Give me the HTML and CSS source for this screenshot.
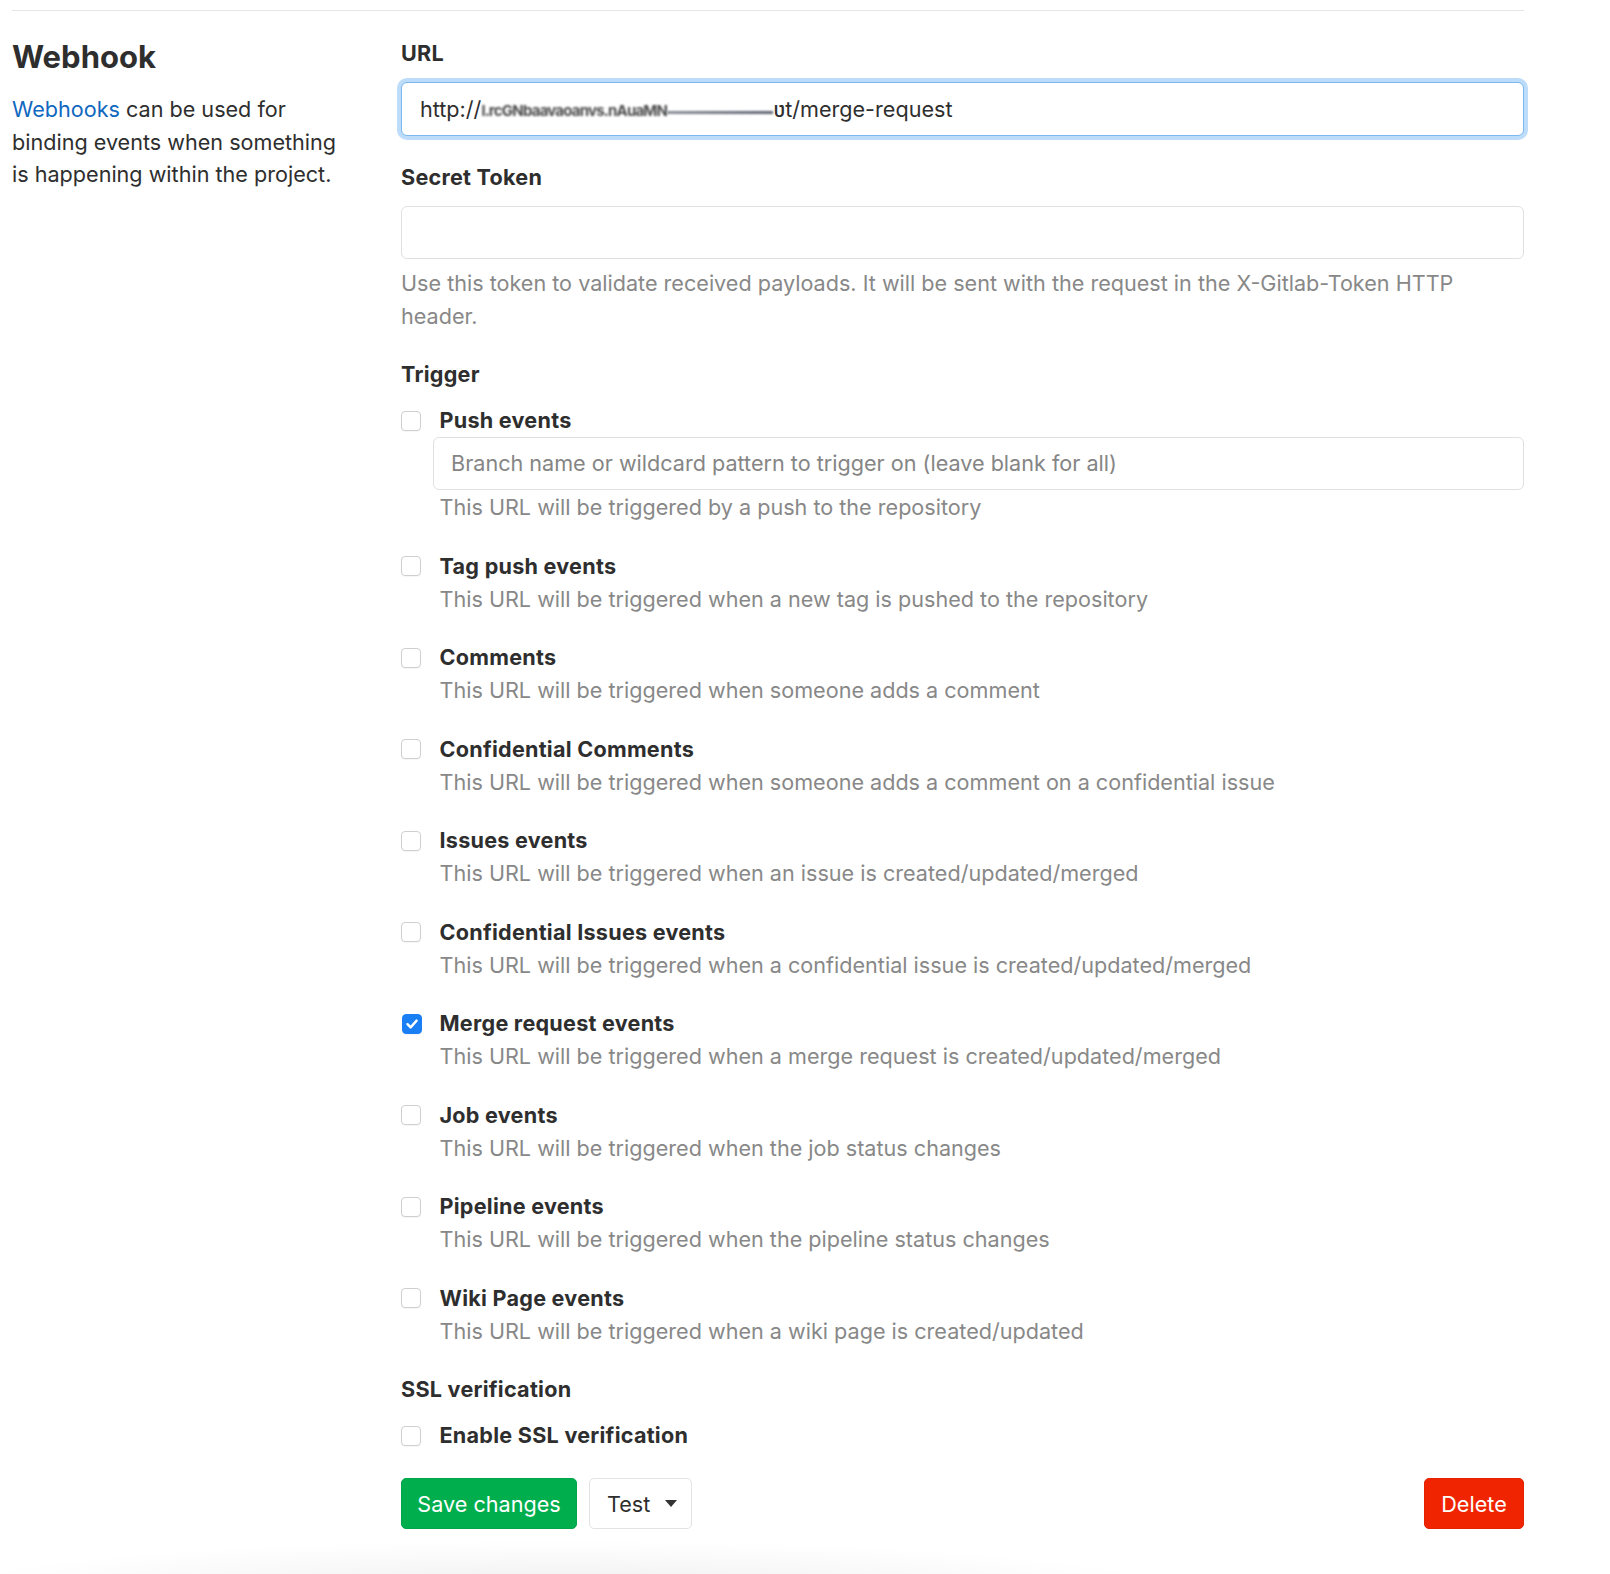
FILE: index.html
```html
<!DOCTYPE html>
<html lang="en">
<head>
<meta charset="utf-8">
<title>Webhook</title>
<link rel="stylesheet" href="styles.css">
</head>
<body>
<div class="page">
  <div class="rule"></div>
  <div class="row">
    <div class="side">
      <h4 class="side-title">Webhook</h4>
      <p class="side-text"><a class="link" href="#">Webhooks</a> can be used for binding events when something is happening within the project.</p>
    </div>
    <form class="main">
      <div class="group">
        <div class="label">URL</div>
        <div class="input input-focus"><span class="val">http://</span><span class="redact"><span class="redact-txt">l.rcGNbaavaoanvs.nAuaMN</span><span class="redact-line"></span></span><span class="val">ʋt/merge-request</span></div>
      </div>
      <div class="group">
        <div class="label">Secret Token</div>
        <div class="input"></div>
        <div class="help help-block">Use this token to validate received payloads. It will be sent with the request in the X-Gitlab-Token HTTP header.</div>
      </div>
      <div class="section-title">Trigger</div>
      <div class="check">
        <span class="box"></span>
        <div class="check-body">
          <div class="check-label">Push events</div>
          <div class="input input-branch"><span class="placeholder">Branch name or wildcard pattern to trigger on (leave blank for all)</span></div>
          <div class="help">This URL will be triggered by a push to the repository</div>
        </div>
      </div>
      <div class="check">
        <span class="box"></span>
        <div class="check-body">
          <div class="check-label">Tag push events</div>
          <div class="help">This URL will be triggered when a new tag is pushed to the repository</div>
        </div>
      </div>
      <div class="check">
        <span class="box"></span>
        <div class="check-body">
          <div class="check-label">Comments</div>
          <div class="help">This URL will be triggered when someone adds a comment</div>
        </div>
      </div>
      <div class="check">
        <span class="box"></span>
        <div class="check-body">
          <div class="check-label">Confidential Comments</div>
          <div class="help">This URL will be triggered when someone adds a comment on a confidential issue</div>
        </div>
      </div>
      <div class="check">
        <span class="box"></span>
        <div class="check-body">
          <div class="check-label">Issues events</div>
          <div class="help">This URL will be triggered when an issue is created/updated/merged</div>
        </div>
      </div>
      <div class="check">
        <span class="box"></span>
        <div class="check-body">
          <div class="check-label">Confidential Issues events</div>
          <div class="help">This URL will be triggered when a confidential issue is created/updated/merged</div>
        </div>
      </div>
      <div class="check">
        <span class="box box-checked"><svg viewBox="0 0 20 20" width="20" height="20"><path d="M5.5 10.2 L8.6 13.4 L14.6 6.6" fill="none" stroke="#fff" stroke-width="2.4" stroke-linecap="round" stroke-linejoin="round"/></svg></span>
        <div class="check-body">
          <div class="check-label">Merge request events</div>
          <div class="help">This URL will be triggered when a merge request is created/updated/merged</div>
        </div>
      </div>
      <div class="check">
        <span class="box"></span>
        <div class="check-body">
          <div class="check-label">Job events</div>
          <div class="help">This URL will be triggered when the job status changes</div>
        </div>
      </div>
      <div class="check">
        <span class="box"></span>
        <div class="check-body">
          <div class="check-label">Pipeline events</div>
          <div class="help">This URL will be triggered when the pipeline status changes</div>
        </div>
      </div>
      <div class="check">
        <span class="box"></span>
        <div class="check-body">
          <div class="check-label">Wiki Page events</div>
          <div class="help">This URL will be triggered when a wiki page is created/updated</div>
        </div>
      </div>
      <div class="section-title">SSL verification</div>
      <div class="check check-last">
        <span class="box"></span>
        <div class="check-body">
          <div class="check-label">Enable SSL verification</div>
        </div>
      </div>
      <div class="actions">
        <button type="button" class="btn btn-success">Save changes</button>
        <button type="button" class="btn btn-default">Test <span class="caret"></span></button>
        <span class="spacer"></span>
        <button type="button" class="btn btn-danger">Delete</button>
      </div>
    </form>
  </div>
  <div class="shade"></div>
</div>
</body>
</html>
```

FILE: styles.css
```css
* { box-sizing: border-box; }
html, body { margin: 0; padding: 0; background: #fff; }
body {
  font-family: Inter, "Noto Sans", "Liberation Sans", sans-serif;
  font-size: 21.6px;
  line-height: 33px;
  color: #2e2e2e;
}
.page {
  width: 1610px;
  height: 1574px;
  overflow: hidden;
  padding: 10px 0 0 12px;
}
.rule {
  width: 1512px;
  height: 1px;
  background: #e5e5e5;
}
.row {
  display: flex;
  padding-top: 26px;
}
.side {
  width: 389px;
  padding-right: 44px;
  flex: none;
}
.side-title {
  margin: 0;
  font-size: 31px;
  line-height: 40px;
  font-weight: 700;
  color: #2e2e2e;
}
.side-text {
  margin: 16px 0 0;
  line-height: 32.7px;
}
.link { color: #1068bf; text-decoration: none; }
.main {
  width: 1123px;
  flex: none;
  margin: 0;
}
.group { margin-bottom: 25px; }
.label, .section-title, .check-label {
  font-weight: 700;
  line-height: 33px;
  letter-spacing: 0.25px;
}
.label { margin-bottom: 12px; }
.section-title { margin-bottom: 13px; }
.input {
  height: 53px;
  border: 1px solid #e0e0e0;
  border-radius: 6px;
  padding: 0 17px;
  display: flex;
  align-items: center;
  white-space: nowrap;
  overflow: hidden;
  background: #fff;
}
.input-focus {
  height: 54px;
  border-color: #7ab8f0;
  box-shadow: 0 0 0 4px #bcdcfa;
  padding-left: 18px;
}
.val { color: #2e2e2e; }
.redact {
  display: inline-flex;
  align-items: center;
  width: 292px;
  height: 33px;
}
.redact-txt {
  font-size: 15px;
  font-weight: 700;
  letter-spacing: -0.8px;
  color: #4a4a4a;
  filter: blur(1px);
  flex: none;
  margin-top: 3px;
}
.redact-line {
  flex: 1;
  height: 3px;
  margin-top: 6px;
  background: linear-gradient(90deg, #8a8f95 0%, #6f7480 60%, #5d6270 100%);
  filter: blur(0.8px);
}
.help {
  color: #888;
  line-height: 33px;
}
.help-block { margin-top: 8px; }
.check {
  display: flex;
  align-items: flex-start;
  margin-bottom: 25.5px;
}
.check-last { margin-bottom: 26px; }
.box {
  flex: none;
  width: 20px;
  height: 20px;
  margin-top: 6.5px;
  margin-right: 12px;
  border: 1px solid #cfcfcf;
  border-radius: 4px;
  background: #fff;
  box-shadow: 0 1px 1px rgba(0,0,0,0.04);
}
.box-checked {
  background: #1a7ff5;
  border-color: #1a7ff5;
  margin-left: 1px;
  margin-right: 11px;
}
.box-checked svg { display: block; margin: -1px; }
.check-body {
  flex: 1;
  min-width: 0;
}
.check-label { padding-left: 6.5px; }
.check-body .help { padding-left: 6.5px; }
.input-branch { margin-top: 0; margin-bottom: 1px; }
.placeholder { color: #858585; }
.actions {
  display: flex;
  align-items: center;
  gap: 12px;
}
.spacer { flex: 1; }
.btn {
  font-family: inherit;
  font-size: 21.6px;
  height: 51px;
  border-radius: 5px;
  border: 1px solid transparent;
  padding: 0 8px;
  display: inline-flex;
  align-items: center;
  white-space: nowrap;
  cursor: pointer;
}
.btn-success {
  background: #00ae4e;
  border-color: #02a44a;
  color: #fff;
  width: 176px;
  justify-content: center;
}
.btn-default {
  background: #fff;
  border-color: #e3e3e3;
  color: #2e2e2e;
  width: 103px;
  padding-left: 17px;
}
.caret {
  display: inline-block;
  width: 0;
  height: 0;
  margin-left: 15px;
  border-left: 6.5px solid transparent;
  border-right: 6.5px solid transparent;
  border-top: 7px solid #333;
}
.btn-danger {
  background: #f02400;
  border-color: #e32200;
  color: #fff;
  width: 100px;
  justify-content: center;
}
.shade {
  width: 1200px;
  height: 60px;
  margin: 0 0 0 -12px;
  background: radial-gradient(ellipse 620px 50px at 560px 62px, #ededed 0%, #f6f6f6 45%, rgba(255,255,255,0) 100%);
}
```
